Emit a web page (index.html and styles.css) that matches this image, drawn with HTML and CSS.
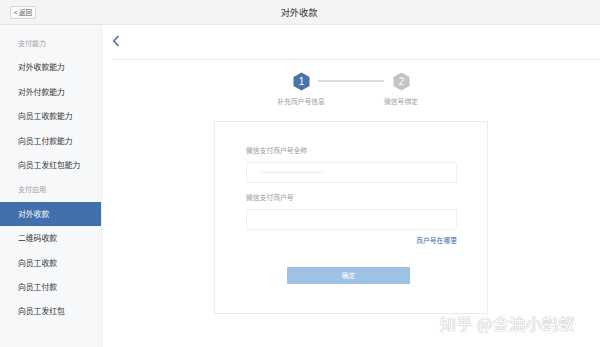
FILE: index.html
```html
<!DOCTYPE html>
<html lang="zh">
<head>
<meta charset="utf-8">
<link rel="stylesheet" href="styles.css">
</head>
<body>
<div class="page">
  <header class="topbar">
    <span class="back-btn">&lt; 返回</span>
    <span class="title">对外收款</span>
  </header>
  <div class="body">
    <nav class="sidebar">
      <div class="group">支付能力</div>
      <div class="item">对外收款能力</div>
      <div class="item">对外付款能力</div>
      <div class="item">向员工收款能力</div>
      <div class="item">向员工付款能力</div>
      <div class="item">向员工发红包能力</div>
      <div class="group">支付应用</div>
      <div class="item active">对外收款</div>
      <div class="item">二维码收款</div>
      <div class="item">向员工收款</div>
      <div class="item">向员工付款</div>
      <div class="item">向员工发红包</div>
    </nav>
    <main class="main">
      <div class="main-head">
        <svg class="chev" width="8" height="12" viewBox="0 0 8 12"><path d="M6.5 1 L1.8 6 L6.5 11" fill="none" stroke="#4a70a8" stroke-width="1.6"/></svg>
      </div>
      <div class="steps">
        <div class="step">
          <svg class="hex" width="17" height="19" viewBox="0 0 17 19"><polygon points="8.5,0.5 16.5,5 16.5,14 8.5,18.5 0.5,14 0.5,5" fill="#4a73a8"/><text x="8.5" y="13" text-anchor="middle" class="hex-num">1</text></svg>
          <span class="step-label">补充商户号信息</span>
        </div>
        <div class="step-line"></div>
        <div class="step">
          <svg class="hex" width="17" height="19" viewBox="0 0 17 19"><polygon points="8.5,0.5 16.5,5 16.5,14 8.5,18.5 0.5,14 0.5,5" fill="#c4c4c4"/><text x="8.5" y="13" text-anchor="middle" class="hex-num">2</text></svg>
          <span class="step-label">微信号绑定</span>
        </div>
      </div>
      <div class="card">
        <div class="field">
          <label class="label">微信支付商户号全称</label>
          <div class="input"><span class="ph"></span></div>
        </div>
        <div class="field">
          <label class="label">微信支付商户号</label>
          <div class="input"></div>
        </div>
        <div class="link-row"><span class="link">商户号在哪里</span></div>
        <div class="btn-row"><span class="btn">确定</span></div>
      </div>
    </main>
  </div>
  <div class="watermark">知乎 @金油小蚂蚁</div>
</div>
</body>
</html>
```
FILE: styles.css
```css
* { box-sizing: border-box; }
html, body { margin: 0; padding: 0; }
body {
  width: 600px;
  height: 347px;
  overflow: hidden;
  font-family: "Noto Sans CJK SC", "Noto Sans", sans-serif;
  background: #fff;
  color: #333;
}
.page { position: relative; width: 600px; height: 347px; display: flex; flex-direction: column; }
.topbar {
  height: 25px;
  flex: none;
  background: #f4f4f4;
  border-bottom: 1px solid #e6e6e6;
  display: flex;
  align-items: center;
  position: relative;
  padding-left: 10px;
}
.back-btn {
  font-size: 6.5px;
  color: #555;
  border: 1px solid #d6d6d6;
  background: #fafafa;
  height: 13px;
  line-height: 11px;
  padding: 0 3px;
  border-radius: 1px;
}
.title {
  flex: 1;
  text-align: center;
  font-size: 9.2px;
  color: #333;
  margin-right: 38px;
}
.body { flex: 1; display: flex; min-height: 0; }
.sidebar {
  width: 102px;
  flex: none;
  background: #f7f8fa;
  border-right: 1px solid #ececec;
  padding-top: 6px;
}
.group, .item {
  height: 24.4px;
  line-height: 24.4px;
  padding-left: 18px;
  white-space: nowrap;
}
.group { font-size: 7px; color: #a0a0a0; }
.item { font-size: 7.8px; color: #333; }
.item.active { background: #4170ad; color: #fff; }
.main { flex: 1; display: flex; flex-direction: column; align-items: center; }
.main-head {
  align-self: stretch;
  margin-left: 10px;
  height: 35px;
  border-bottom: 1px solid #ececec;
  display: flex;
  align-items: center;
}
.chev { display: block; margin-top: -3px; }
.steps {
  display: flex;
  align-items: flex-start;
  margin-top: 12px;
  height: 49px;
}
.step { display: flex; flex-direction: column; align-items: center; width: 50px; }
.hex { display: block; }
.hex-num { font-family: "Liberation Sans", sans-serif; font-size: 10px; fill: #fff; }
.step-label { font-size: 6.8px; color: #a0a0a0; margin-top: 5px; white-space: nowrap; }
.step-line { width: 66px; height: 2px; background: #dcdcdc; margin: 8px -8px 0; }
.card {
  width: 274px;
  height: 193px;
  border: 1px solid #ececec;
  padding: 23px 30px 0 31px;
  display: flex;
  flex-direction: column;
}
.field { display: flex; flex-direction: column; margin-bottom: 9px; }
.label { font-size: 6.8px; color: #999; line-height: 10px; margin-bottom: 7px; }
.input { height: 21px; border: 1px solid #efefef; border-radius: 1px; background: #fff; position: relative; }
.ph { display: block; margin: 8px 0 0 14px; width: 62px; height: 3px; background: #f5f5f5; }
.link-row { display: flex; justify-content: flex-end; margin-top: -4px; }
.link { font-size: 6.8px; color: #3a6aa8; }
.btn-row { display: flex; justify-content: center; margin-top: 22px; padding-right: 6px; }
.btn {
  width: 123px;
  height: 17px;
  line-height: 17px;
  text-align: center;
  background: #9dc2e4;
  color: #fff;
  font-size: 6.8px;
  border-radius: 1px;
}
.watermark {
  position: absolute;
  left: 440px;
  top: 311px;
  font-size: 16px;
  color: #fff;
  letter-spacing: 0.5px;
  text-shadow: 0 0 1px #aaa, 0 0 1px #bbb;
  white-space: nowrap;
}
```
